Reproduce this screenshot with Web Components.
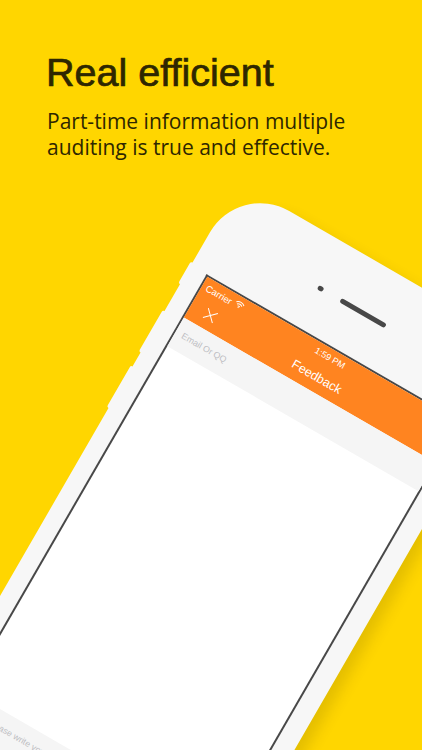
<!DOCTYPE html>
<html>
<head>
<meta charset="utf-8">
<title>Real efficient</title>
<style>
  html, body { margin: 0; padding: 0; background: #ffd600; }
</style>
</head>
<body>
<store-shot>
  <shot-caption>
    <span slot="title">Real efficient</span>
    <span slot="text">Part-time information multiple<br>auditing is true and effective.</span>
  </shot-caption>
  <phone-frame>
    <feedback-screen></feedback-screen>
  </phone-frame>
</store-shot>

<script>
window.customElements.define('store-shot',
    class extends HTMLElement {
        constructor() {
            super()
            this.attachShadow({ mode: "open" })
            this.shadowRoot.innerHTML = `
            <style>
                :host{
                    display:block;
                    width:422px;
                    height:750px;
                    overflow:hidden;
                    background:#ffd600;
                }
            </style>
            <slot></slot>
            `
        }
    }
)

window.customElements.define('shot-caption',
    class extends HTMLElement {
        constructor() {
            super()
            this.attachShadow({ mode: "open" })
            this.shadowRoot.innerHTML = `
            <style>
                :host{
                    display:block;
                    box-sizing:border-box;
                    height:160px;
                    padding:48px 0 0 46px;
                    color:#2e2700;
                }
                .title{
                    font:400 39.5px/48px "Liberation Sans", Arial, sans-serif;
                    -webkit-text-stroke:.7px #2e2700;
                    margin-bottom:11.5px;
                }
                .text{
                    font:400 21px/26px "Open Sans", sans-serif;
                    padding-left:1px;
                }
            </style>
            <div class="title"><slot name="title"></slot></div>
            <div class="text"><slot name="text"></slot></div>
            `
        }
    }
)

window.customElements.define('phone-frame',
    class extends HTMLElement {
        constructor() {
            super()
            this.attachShadow({ mode: "open" })
            this.shadowRoot.innerHTML = `
            <style>
                :host{
                    display:block;
                    position:relative;
                    box-sizing:border-box;
                    width:331.5px;
                    height:716px;
                    margin:22.2px 0 0 238.75px;
                    padding:0 20.5px 0 19px;
                    background:#f7f7f7;
                    border-radius:58px;
                    transform-origin:0 0;
                    transform:rotate(30deg);
                    box-shadow:14px 0 14px -4px rgba(90,70,0,.16);
                }
                .head{
                    height:97px;
                    box-sizing:border-box;
                    padding:6px 0 0 102px;
                    display:flex;
                    align-items:center;
                    gap:20px;
                }
                .dot{
                    width:5.5px;
                    height:5.5px;
                    border-radius:50%;
                    background:#484848;
                }
                .speaker{
                    width:52px;
                    height:5px;
                    border-radius:3px;
                    background:#484848;
                }
                .key{
                    position:absolute;
                    left:-2.5px;
                    width:3px;
                    background:#f7f7f7;
                    border-radius:2px 0 0 2px;
                }
                .k1{ top:93px; height:25px; }
                .k2{ top:149px; height:48px; }
                .k3{ top:213px; height:48px; }
            </style>
            <div class="key k1"></div>
            <div class="key k2"></div>
            <div class="key k3"></div>
            <div class="head">
                <div class="dot"></div>
                <div class="speaker"></div>
            </div>
            <slot></slot>
            `
        }
    }
)

window.customElements.define('status-bar',
    class extends HTMLElement {
        constructor() {
            super()
            this.attachShadow({ mode: "open" })
            this.shadowRoot.innerHTML = `
            <style>
                :host{
                    display:grid;
                    grid-template-columns:1fr auto 1fr;
                    align-items:center;
                    height:19px;
                    padding:0 1px 0 5px;
                    font:400 9px "Liberation Sans", Arial, sans-serif;
                    color:#fff;
                }
                .left{
                    display:flex;
                    align-items:center;
                    gap:3px;
                    font-size:9.5px;
                }
                svg{ display:block; margin-top:-2px; }
            </style>
            <div class="left">
                <span>Carrier</span>
                <svg width="10" height="8" viewBox="0 0 10 8" fill="none" stroke="#fff" stroke-width="1">
                    <path d="M.6 3A6.2 6.2 0 0 1 9.4 3"/>
                    <path d="M2.2 4.6A3.9 3.9 0 0 1 7.8 4.6"/>
                    <path d="M3.8 6.1A1.7 1.7 0 0 1 6.2 6.1"/>
                    <circle cx="5" cy="7.2" r=".6" fill="#fff" stroke="none"/>
                </svg>
            </div>
            <span>1:59 PM</span>
            <span></span>
            `
        }
    }
)

window.customElements.define('nav-bar',
    class extends HTMLElement {
        constructor() {
            super()
            this.attachShadow({ mode: "open" })
            this.shadowRoot.innerHTML = `
            <style>
                :host{
                    display:grid;
                    grid-template-columns:1fr auto 1fr;
                    align-items:center;
                    height:28px;
                    padding:0 16px 2px;
                    box-sizing:border-box;
                    font:400 12.6px "Liberation Sans", Arial, sans-serif;
                    color:#fff;
                }
                svg{ display:block; }
            </style>
            <svg width="12" height="12" viewBox="0 0 12 12" stroke="#fff" stroke-width="1" fill="none">
                <path d="M.5 .5 11.5 11.5M11.5 .5 .5 11.5"/>
            </svg>
            <span><slot></slot></span>
            <span></span>
            `
        }
    }
)

window.customElements.define('feedback-screen',
    class extends HTMLElement {
        constructor() {
            super()
            this.attachShadow({ mode: "open" })
            this.shadowRoot.innerHTML = `
            <style>
                :host{
                    display:flex;
                    flex-direction:column;
                    box-sizing:border-box;
                    height:520px;
                    margin:-1.5px -1px 0 -1.5px;
                    border:solid #484848;
                    border-width:2.5px 2.5px 0;
                    background:#fff;
                }
                .orange{ background:#ff8420; }
                .band{
                    background:#f5f5f5;
                    font:400 8.8px "Liberation Sans", Arial, sans-serif;
                    color:#bdbdc2;
                }
                .email{
                    height:33px;
                    line-height:33px;
                    padding-left:8px;
                }
                .blank{ flex:1; }
                .note{
                    height:40px;
                    padding:11px 0 0 33px;
                    box-sizing:border-box;
                }
            </style>
            <div class="orange">
                <status-bar></status-bar>
                <nav-bar>Feedback</nav-bar>
            </div>
            <div class="band email">Email Or QQ</div>
            <div class="blank"></div>
            <div class="band note">Please write your feedback</div>
            `
        }
    }
)
</script>
</body>
</html>
